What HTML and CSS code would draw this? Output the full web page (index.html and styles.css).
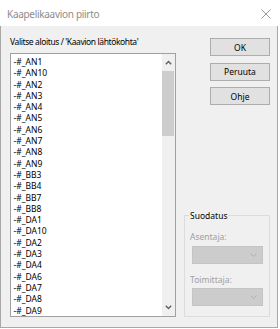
FILE: index.html
```html
<!DOCTYPE html>
<html lang="fi">
<head>
    <meta charset="UTF-8">
    <title>Kaapelikaavion piirto</title>
    <link rel="stylesheet" href="styles.css">
</head>
<body>
    <div class="window">
        <div class="titlebar">
            <span class="title">Kaapelikaavion piirto</span>
            <svg class="close" width="10" height="10" viewBox="0 0 10 10">
                <path d="M0.5 0.5 L9.5 9.5 M9.5 0.5 L0.5 9.5" stroke="#9a9a9a" stroke-width="1" fill="none"/>
            </svg>
        </div>
        <div class="content">
            <div class="left">
                <div class="prompt">Valitse aloitus / 'Kaavion lähtökohta'</div>
                <div class="listbox">
                    <ul class="items">
                        <li>-#_AN1</li>
                        <li>-#_AN10</li>
                        <li>-#_AN2</li>
                        <li>-#_AN3</li>
                        <li>-#_AN4</li>
                        <li>-#_AN5</li>
                        <li>-#_AN6</li>
                        <li>-#_AN7</li>
                        <li>-#_AN8</li>
                        <li>-#_AN9</li>
                        <li>-#_BB3</li>
                        <li>-#_BB4</li>
                        <li>-#_BB7</li>
                        <li>-#_BB8</li>
                        <li>-#_DA1</li>
                        <li>-#_DA10</li>
                        <li>-#_DA2</li>
                        <li>-#_DA3</li>
                        <li>-#_DA4</li>
                        <li>-#_DA6</li>
                        <li>-#_DA7</li>
                        <li>-#_DA8</li>
                        <li>-#_DA9</li>
                    </ul>
                    <div class="scrollbar">
                        <div class="arrow">
                            <svg width="7" height="5" viewBox="0 0 7 5"><path d="M0.8 4.2 L3.5 1.5 L6.2 4.2" stroke="#606060" stroke-width="1.4" fill="none"/></svg>
                        </div>
                        <div class="track"><div class="thumb"></div></div>
                        <div class="arrow">
                            <svg width="7" height="5" viewBox="0 0 7 5"><path d="M0.8 0.8 L3.5 3.5 L6.2 0.8" stroke="#606060" stroke-width="1.4" fill="none"/></svg>
                        </div>
                    </div>
                </div>
            </div>
            <div class="right">
                <div class="buttons">
                    <button class="btn">OK</button>
                    <button class="btn">Peruuta</button>
                    <button class="btn">Ohje</button>
                </div>
                <fieldset class="filter">
                    <legend>Suodatus</legend>
                    <div class="field-label first">Asentaja:</div>
                    <div class="combo">
                        <svg width="7" height="4" viewBox="0 0 7 4"><path d="M0.5 0.5 L3.5 3.5 L6.5 0.5" stroke="#b0b0b0" stroke-width="1" fill="none"/></svg>
                    </div>
                    <div class="field-label second">Toimittaja:</div>
                    <div class="combo">
                        <svg width="7" height="4" viewBox="0 0 7 4"><path d="M0.5 0.5 L3.5 3.5 L6.5 0.5" stroke="#b0b0b0" stroke-width="1" fill="none"/></svg>
                    </div>
                </fieldset>
            </div>
        </div>
    </div>
</body>
</html>
```

FILE: styles.css
```css
* {
    box-sizing: border-box;
}
body {
    margin: 0;
    background-color: #ffffff;
    font-family: "Noto Sans", "Open Sans", sans-serif;
    font-size: 8.5px;
    color: #000;
}
.window {
    width: 278px;
    height: 328px;
    display: flex;
    flex-direction: column;
    background-color: #f0f0f0;
    border: 1px solid #a8a8a8;
    border-top: none;
}
.titlebar {
    height: 26px;
    flex-shrink: 0;
    display: flex;
    align-items: center;
    justify-content: space-between;
    padding: 1px 7px 0 7px;
    margin: 0 -1px;
    background-color: #ffffff;
}
.title {
    font-size: 10px;
    letter-spacing: -0.3px;
    color: #8c8c8c;
}
.close {
    display: block;
}
.content {
    flex: 1;
    display: flex;
    padding: 0 7px 10.5px 9px;
}
.left {
    width: 166px;
    display: flex;
    flex-direction: column;
    padding-top: 10px;
}
.prompt {
    line-height: 12px;
    height: 12px;
    margin-bottom: 4.5px;
    letter-spacing: -0.4px;
    white-space: nowrap;
}
.listbox {
    flex: 1;
    display: flex;
    background-color: #ffffff;
    border: 1px solid #a0a0a0;
}
.items {
    flex: 1;
    list-style: none;
    margin: 0;
    padding: 2.5px 0 0 2.5px;
    overflow: hidden;
}
.items li {
    height: 11.3px;
    line-height: 11.3px;
    white-space: nowrap;
}
.scrollbar {
    width: 13.5px;
    display: flex;
    flex-direction: column;
    background-color: #f0f0f0;
}
.arrow {
    height: 17px;
    display: flex;
    align-items: center;
    justify-content: center;
}
.track {
    flex: 1;
}
.thumb {
    height: 65px;
    margin: 0 1px 0 0;
    background-color: #cdcdcd;
}
.right {
    width: 86.5px;
    margin-left: 7.5px;
    display: flex;
    flex-direction: column;
    justify-content: space-between;
    padding-top: 12px;
}
.buttons {
    display: flex;
    flex-direction: column;
    align-items: flex-end;
    gap: 6.5px;
}
.btn {
    width: 60px;
    height: 18px;
    padding: 0;
    font-family: inherit;
    font-size: 8.5px;
    color: #000;
    background-color: #e1e1e1;
    border: 1px solid #adadad;
    border-radius: 0;
}
.filter {
    margin: 0;
    padding: 0 6.5px 9.5px 7.5px;
    border: 1px solid #dcdcdc;
    min-width: 0;
}
.filter legend {
    padding: 0 1px;
    margin-left: -3px;
    line-height: 12px;
    font-size: 8.5px;
}
.field-label {
    line-height: 12px;
    color: #a0a0a0;
    margin-left: -2px;
}
.field-label.first {
    margin-top: 9.5px;
    margin-bottom: 3px;
}
.field-label.second {
    margin-top: 10px;
    margin-bottom: 2px;
}
.combo {
    height: 18px;
    background-color: #cccccc;
    border: 1px solid #c4c4c4;
    display: flex;
    align-items: center;
    justify-content: flex-end;
    padding-right: 5px;
}
```
